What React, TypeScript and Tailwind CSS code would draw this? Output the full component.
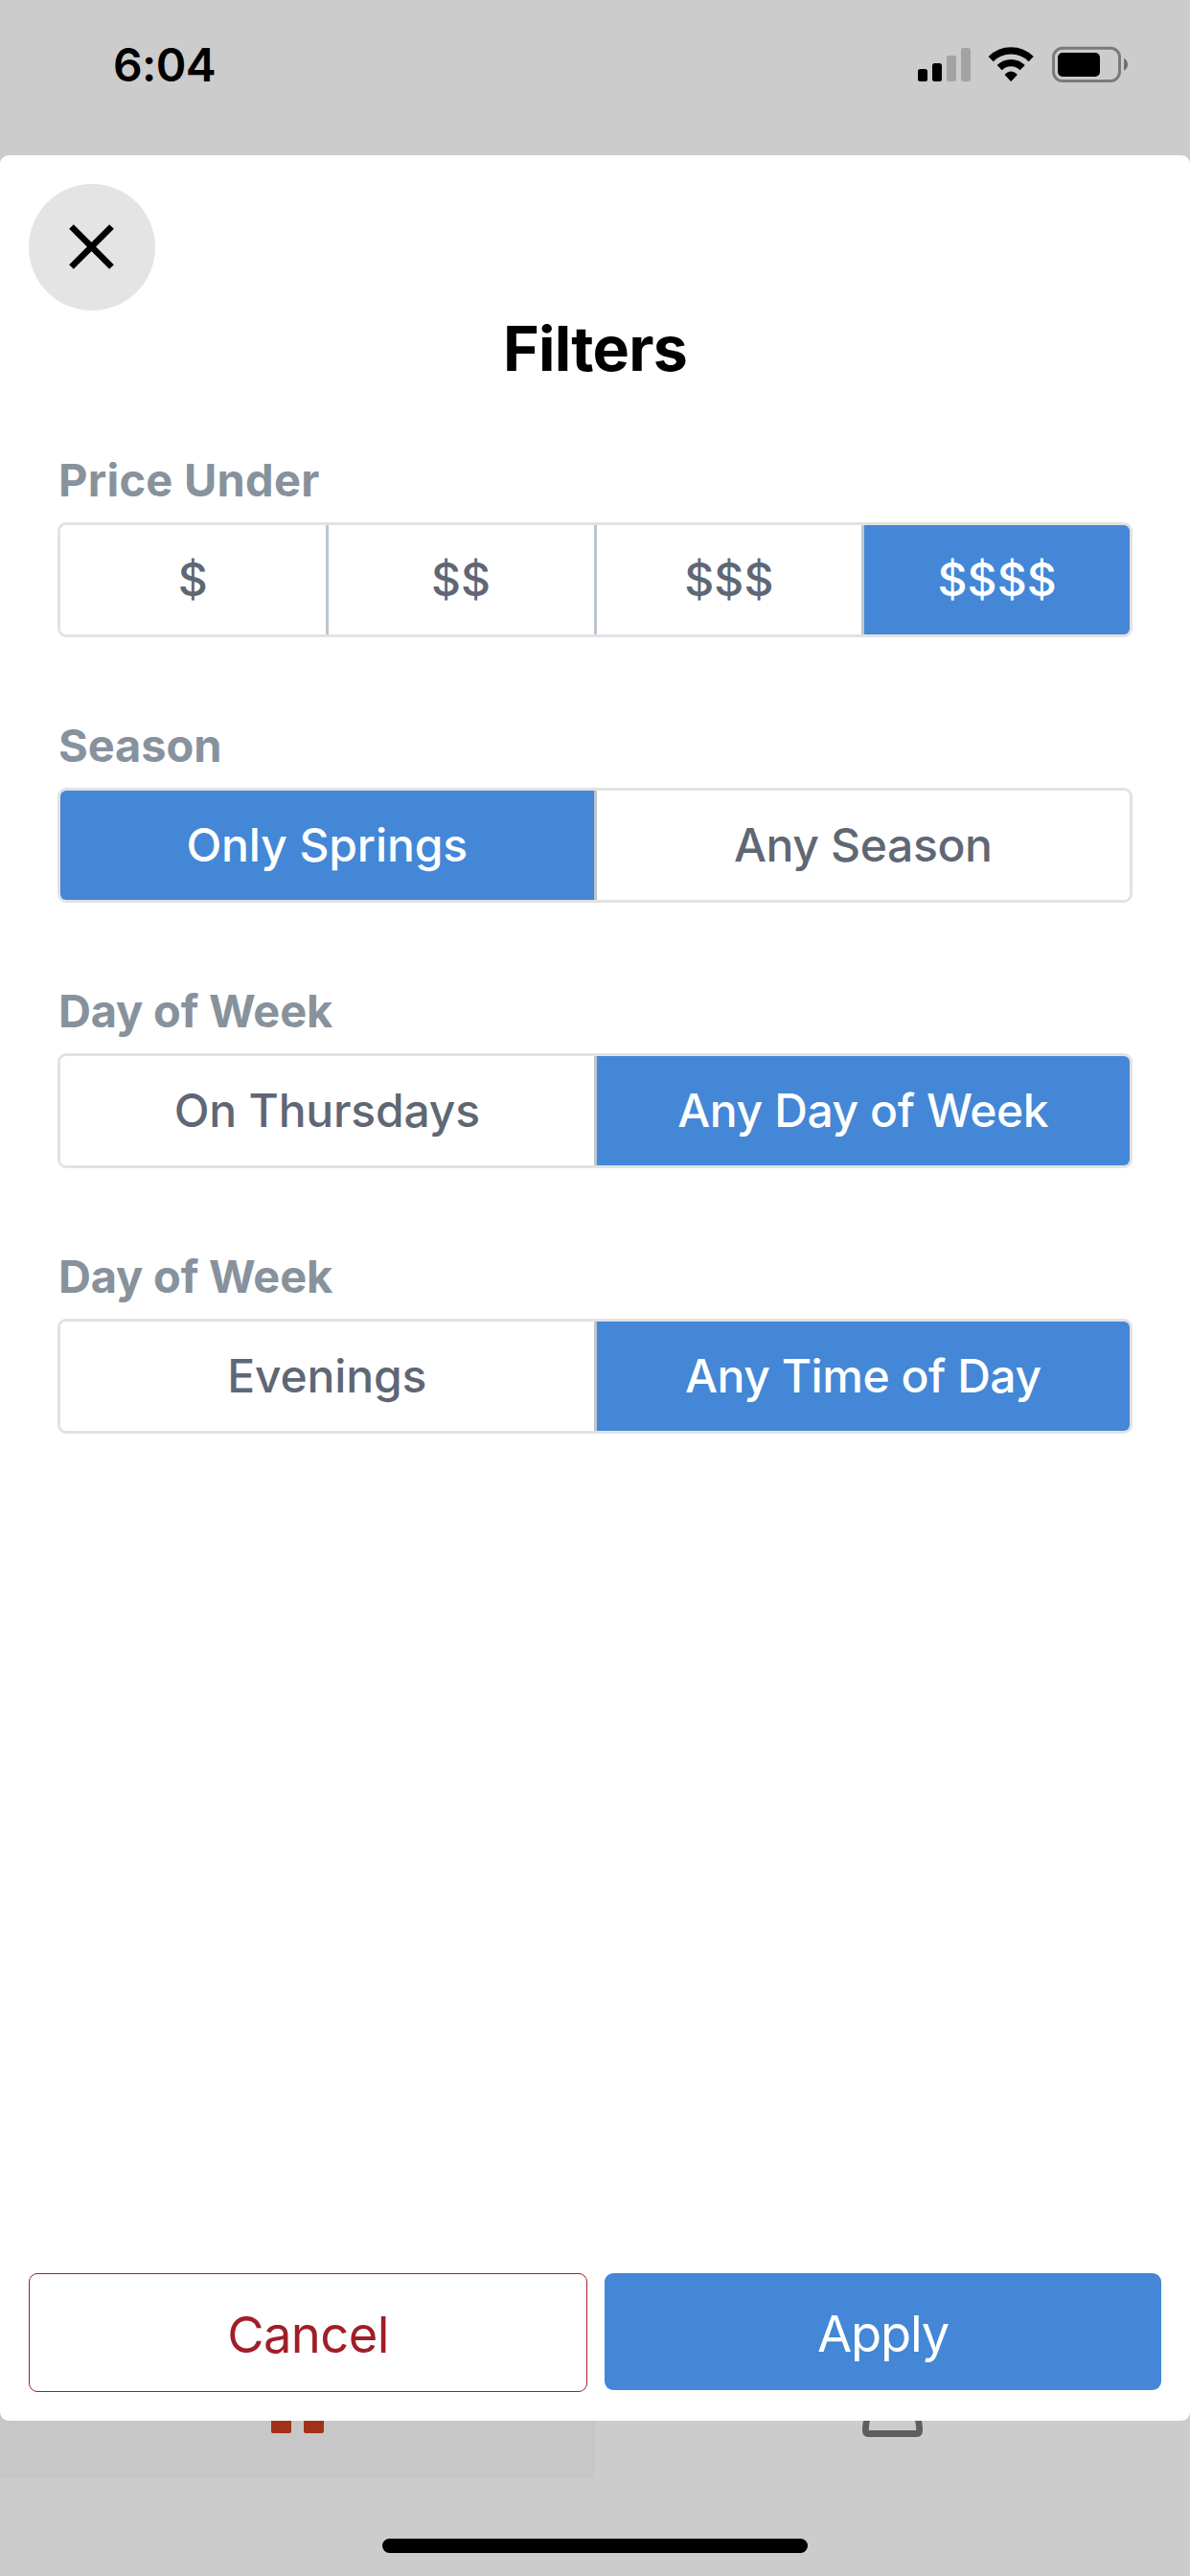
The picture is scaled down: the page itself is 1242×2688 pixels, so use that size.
type Option = { label: string; tracking?: string };

function StatusBar() {
  return (
    <div className="flex h-[162px] items-start justify-between pr-[65px] pl-[118px] pt-[38px] text-black">
      <span className="text-[48px] leading-[60px] font-semibold tracking-[-0.6px]">6:04</span>
      <div className="flex items-start pt-[10px]">
        <svg className="mt-[2px] mr-[18px]" width="55" height="35" viewBox="0 0 55 35">
          <rect x="0" y="22" width="10" height="13" rx="2.5" fill="#000" />
          <rect x="15" y="16" width="10" height="19" rx="2.5" fill="#000" />
          <rect x="30" y="8" width="10" height="27" rx="2.5" fill="#a3a3a3" />
          <rect x="45" y="0" width="10" height="35" rx="2.5" fill="#a3a3a3" />
        </svg>
        <svg className="mt-px mr-[18px]" width="49" height="37" viewBox="-0.5 0 49 37">
          <path d="M2.67 12.67A29.7 29.7 0 0 1 44.67 12.67" fill="none" stroke="#000" strokeWidth="7.3" />
          <path d="M11.67 21.67A17 17 0 0 1 35.67 21.67" fill="none" stroke="#000" strokeWidth="7.3" />
          <path d="M17.1 29.1C20.7 24.3 26.6 24.3 30.3 29.1L24.3 35.5Q23.67 36.1 23.1 35.5Z" fill="#000" />
        </svg>
        <svg width="79" height="38" viewBox="0 0 79 38">
          <rect x="1.5" y="2.2" width="69" height="34.3" rx="9.5" fill="none" stroke="#7a7a7a" strokeWidth="3" />
          <rect x="6" y="7" width="44" height="25" rx="5" fill="#000" />
          <path d="M75 12.7Q79 15.2 79 19.3T75 26Z" fill="#6e6e6e" />
        </svg>
      </div>
    </div>
  );
}

function Segmented({
  title,
  titleClass,
  options,
  selected,
}: {
  title: string;
  titleClass: string;
  options: Option[];
  selected: number;
}) {
  return (
    <section>
      <h2 className={`pl-px text-[47px] leading-[60px] font-bold text-[#87929d] ${titleClass}`}>{title}</h2>
      <div className="mt-[14px] flex h-[120px] overflow-hidden rounded-[9px] border-[3px] border-[#e2e2e2] divide-x-[3px] divide-[#bcc6ce]">
        {options.map((o, i) => (
          <button
            key={i}
            className={`flex flex-1 items-center justify-center text-[48px] leading-[60px] font-medium whitespace-nowrap ${
              i === selected ? "bg-[#4387d6] text-white" : "bg-white text-[#5f6775]"
            } ${o.tracking ?? ""}`}
          >
            {o.label}
          </button>
        ))}
      </div>
    </section>
  );
}

export default function App() {
  return (
    <div className="flex h-[2688px] w-[1242px] flex-col bg-[#cccccc] font-[Inter,sans-serif]">
      <StatusBar />
      <main className="relative z-10 flex h-[2364px] flex-col rounded-[9px] bg-white px-[30px] pt-[30px] pb-[30px]">
        <button className="flex size-[132px] items-center justify-center rounded-full bg-[#e4e4e4]">
          <svg className="mr-px mb-px" width="47" height="47" viewBox="0 0 47 47">
            <path d="M2.5 2.5L44.5 44.5M44.5 2.5L2.5 44.5" stroke="#000" strokeWidth="6.6" />
          </svg>
        </button>
        <h1 className="pt-px text-center text-[64.5px] leading-[79px] font-bold tracking-[-0.8px] text-black">Filters</h1>
        <div className="mt-[67px] flex flex-col gap-[83px] px-[30px]">
          <Segmented
            title="Price Under"
            titleClass="tracking-[0.25px]"
            options={[{ label: "$" }, { label: "$$" }, { label: "$$$" }, { label: "$$$$" }]}
            selected={3}
          />
          <Segmented
            title="Season"
            titleClass="tracking-[-0.1px]"
            options={[
              { label: "Only Springs", tracking: "tracking-[-0.1px]" },
              { label: "Any Season", tracking: "tracking-[-0.35px]" },
            ]}
            selected={0}
          />
          <Segmented
            title="Day of Week"
            titleClass="tracking-[-0.2px]"
            options={[
              { label: "On Thursdays", tracking: "tracking-[-0.2px]" },
              { label: "Any Day of Week", tracking: "tracking-[-0.4px]" },
            ]}
            selected={1}
          />
          <Segmented
            title="Day of Week"
            titleClass="tracking-[-0.2px]"
            options={[
              { label: "Evenings", tracking: "tracking-[-0.15px]" },
              { label: "Any Time of Day", tracking: "tracking-[-0.45px]" },
            ]}
            selected={1}
          />
        </div>
        <div className="mt-auto flex items-start gap-[18px] text-[52.5px] leading-[64px]">
          <button className="flex h-[124px] flex-1 items-center justify-center rounded-[9px] border border-[#a01e28] pt-1 tracking-[-0.6px] text-[#a01e28]">
            Cancel
          </button>
          <button className="flex h-[122px] flex-1 items-center justify-center rounded-[9px] bg-[#4387d6] pt-1 tracking-[-1.2px] text-white">
            Apply
          </button>
        </div>
      </main>
      <nav className="-mt-[9px] flex h-[69px]">
        <div className="flex flex-1 justify-center bg-[#c7c7c7]">
          <svg width="55" height="22" viewBox="0 0 55 22">
            <path d="M0 9H21V20Q21 22 19 22H2Q0 22 0 20ZM34 9H55V20Q55 22 53 22H36Q34 22 34 20Z" fill="#a23119" />
          </svg>
        </div>
        <div className="flex flex-1 justify-center">
          <svg width="63" height="26" viewBox="0 0 63 26">
            <path d="M5.6 6Q3.4 11 3.4 19Q3.4 22.5 6.8 22.5H56.2Q59.6 22.5 59.6 19Q59.6 11 57.4 6" fill="none" stroke="#5e5e5e" strokeWidth="6.8" />
          </svg>
        </div>
      </nav>
      <div className="mt-[63px] flex justify-center">
        <div className="h-[15px] w-[444px] rounded-full bg-black" />
      </div>
    </div>
  );
}
